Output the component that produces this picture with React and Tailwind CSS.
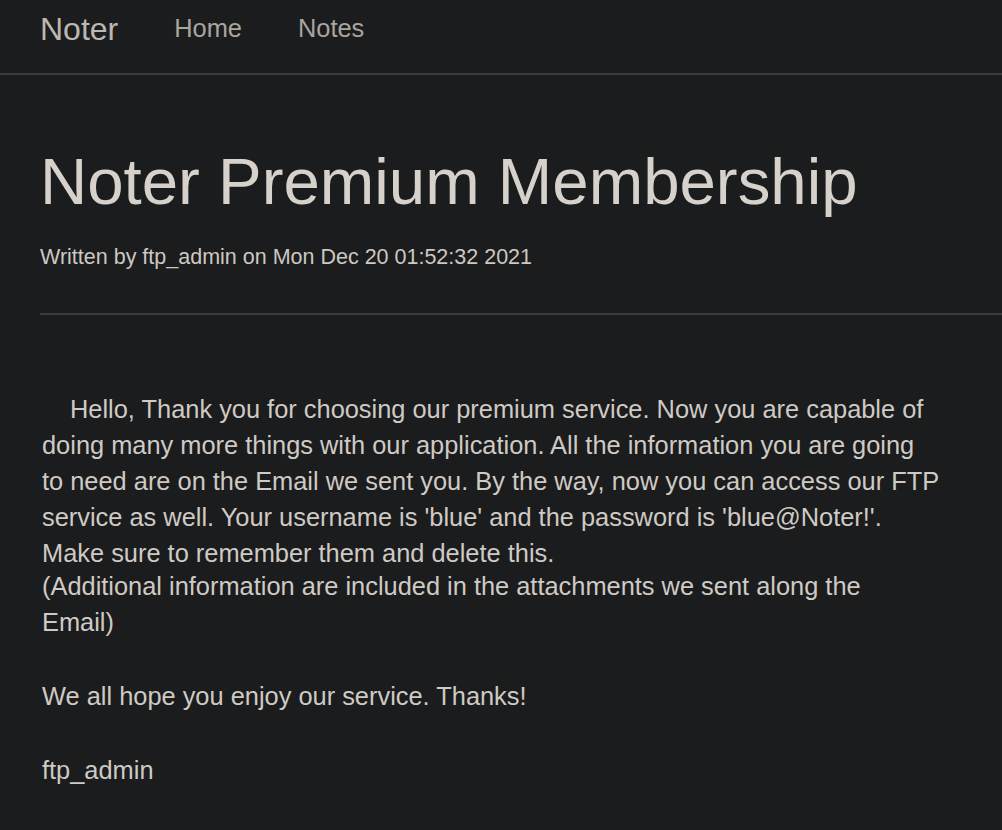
const NAV_LINKS = ['Home', 'Notes'];

export default function App() {
    return (
        <div className="min-h-[830px] bg-[#1b1c1e] font-['Liberation_Sans',Arial,sans-serif] text-[#cfcac3]">
            <nav className="h-[75px] border-b-2 border-[#3a3b3d] flex items-start pl-[40px]">
                <a className="mt-[9px] text-[32px] leading-[40px] text-[#bcb7b0]">Noter</a>
                <ul className="flex ml-[28px]">
                    {NAV_LINKS.map(link => (
                        <li key={link} className="mt-[13px] px-[28px] text-[25.4px] leading-[30px] text-[#aaa59e]">
                            {link}
                        </li>
                    ))}
                </ul>
            </nav>

            <main className="pl-[40px]">
                <h1 className="mt-[68px] text-[65.4px] leading-[78px] text-[#d6d1ca]">Noter Premium Membership</h1>
                <p className="mt-[21px] text-[21.5px] leading-[30px] text-[#cdc8c1]">
                    Written by ftp_admin on Mon Dec 20 01:52:32 2021
                </p>
                <hr className="mt-[41px] border-t-2 border-[#3a3b3d]" />

                {/* line breaks kept as in the original post */}
                <div className="mt-[76px] pl-[2px] text-[25.4px] leading-[36px] whitespace-nowrap">
                    <p className="indent-[28px]">
                        Hello, Thank you for choosing our premium service. Now you are capable of
                        <br />
                        doing many more things with our application. All the information you are going
                        <br />
                        to need are on the Email we sent you. By the way, now you can access our FTP
                        <br />
                        service as well. Your username is 'blue' and the password is 'blue@Noter!'.
                        <br />
                        Make sure to remember them and delete this.
                    </p>
                    <p className="-mt-[3px]">
                        (Additional information are included in the attachments we sent along the
                        <br />
                        Email)
                    </p>
                    <p className="mt-[38px]">We all hope you enjoy our service. Thanks!</p>
                    <p className="mt-[38px]">ftp_admin</p>
                </div>
            </main>
        </div>
    );
}
